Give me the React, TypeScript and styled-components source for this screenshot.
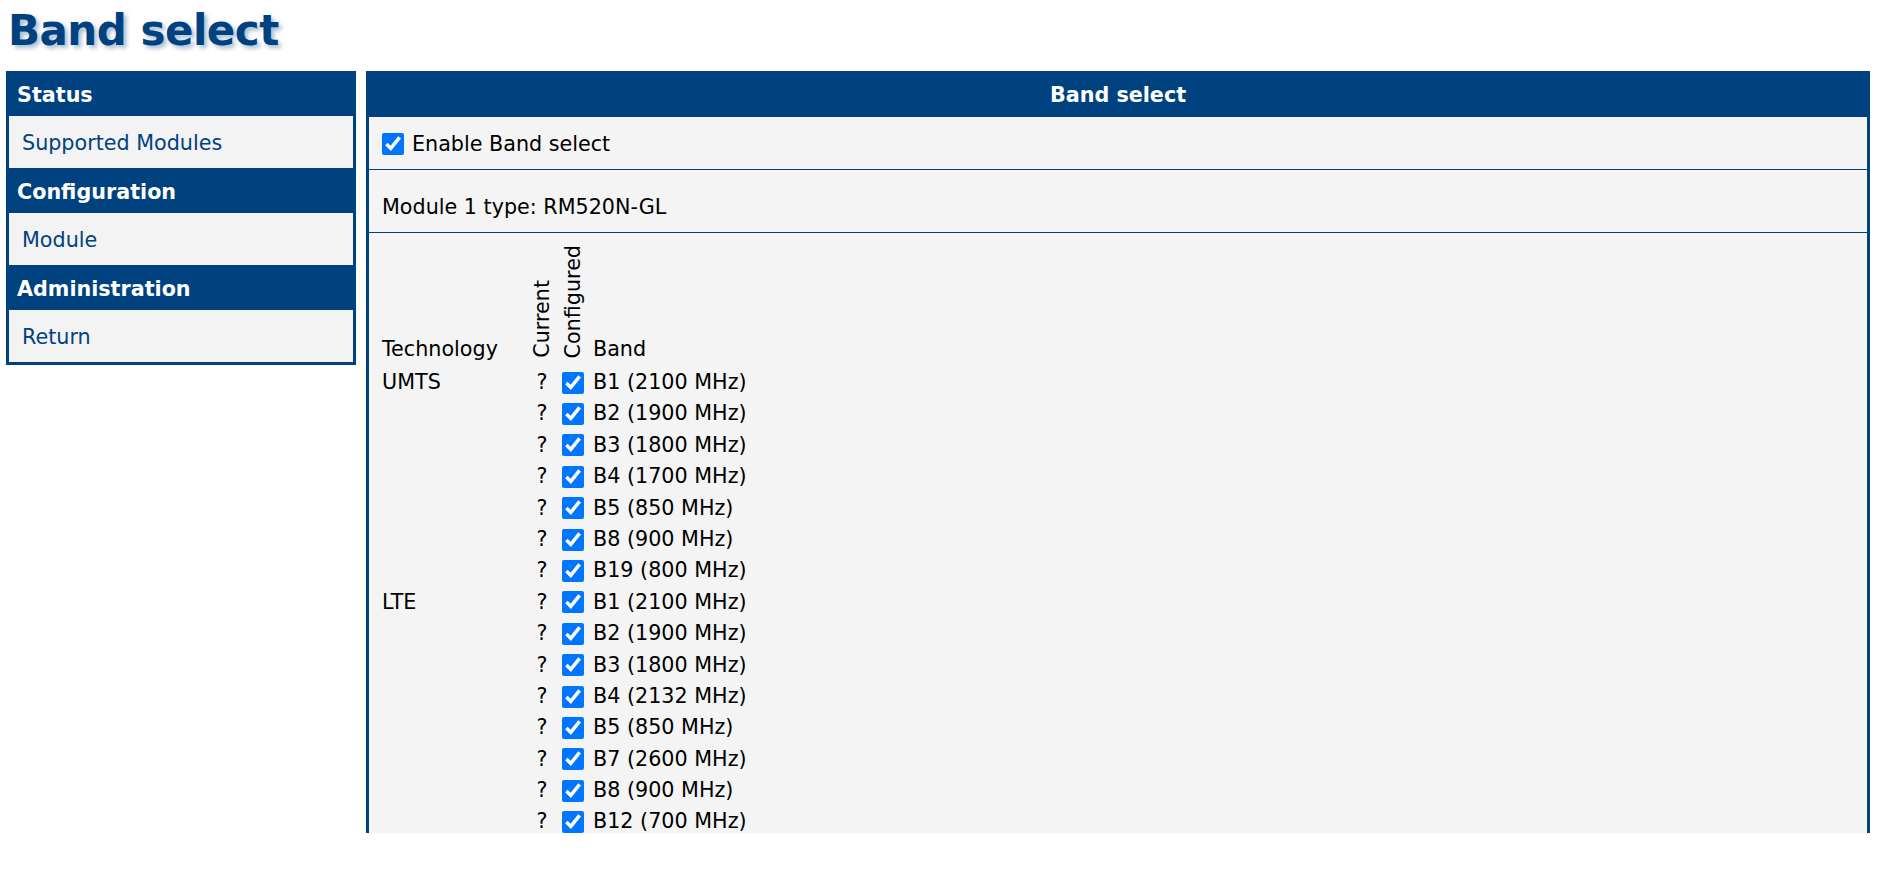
import React from "react";
import styled, { createGlobalStyle } from "styled-components";

const BLUE = "#00427f";

const GlobalStyle = createGlobalStyle`
  html, body { margin: 0; padding: 0; background: #ffffff; }
  body { font-family: "DejaVu Sans", Verdana, sans-serif; font-size: 20.7px; color: #000; }
  * { box-sizing: border-box; }
`;

const Page = styled.div`
  padding: 0 9px 0 6px;
`;

const Title = styled.h1`
  margin: 0 0 15px 2px;
  padding-top: 6px;
  height: 56px;
  line-height: 50px;
  font-size: 42px;
  letter-spacing: -0.5px;
  font-weight: bold;
  color: ${BLUE};
  text-shadow: 3px 3px 4px rgba(0, 66, 127, 0.35);
`;

const Layout = styled.div`
  display: flex;
  align-items: flex-start;
  gap: 10px;
`;

const Sidebar = styled.nav`
  width: 350px;
  flex: 0 0 350px;
  background: ${BLUE};
  padding: 0 3px 3px 3px;
  display: flex;
  flex-direction: column;
`;

const SideHeader = styled.div`
  height: 45px;
  line-height: 48px;
  padding-left: 8px;
  color: #fff;
  font-weight: bold;
`;

const SideItem = styled.a`
  display: block;
  height: 52px;
  line-height: 54px;
  padding-left: 13px;
  background: #f3f3f3;
  color: ${BLUE};
  text-decoration: none;
`;

const Main = styled.section`
  flex: 1;
  min-width: 0;
  display: flex;
  flex-direction: column;
`;

const PanelHeader = styled.div`
  height: 46px;
  line-height: 49px;
  background: ${BLUE};
  color: #fff;
  font-weight: bold;
  text-align: center;
`;

const PanelBody = styled.div`
  height: 716px;
  overflow: hidden;
  background: #f4f4f4;
  border-left: 3px solid ${BLUE};
  border-right: 3px solid ${BLUE};
`;

const Section = styled.div<{ $h: number; $pt?: number }>`
  height: ${(p) => p.$h + 1}px;
  padding: ${(p) => p.$pt ?? 0}px 0 0 13px;
  border-bottom: 1px solid ${BLUE};
  display: flex;
  align-items: center;
`;

const CheckLabel = styled.label`
  display: flex;
  align-items: center;
  gap: 8px;
`;

const Check = styled.input.attrs({ type: "checkbox" })`
  width: 22px;
  height: 22px;
  margin: 0;
  accent-color: #0075ff;
`;

const BandGrid = styled.div`
  display: grid;
  grid-template-columns: 145px 30px 31px auto;
  grid-template-rows: 120px;
  grid-auto-rows: 31.4px;
  padding: 14px 0 0 13px;
  line-height: 31.4px;
`;

const HeadCell = styled.div<{ $pad?: number }>`
  display: flex;
  flex-direction: column;
  justify-content: flex-end;
  align-items: center;
  padding-bottom: ${(p) => p.$pad ?? 0}px;
`;

const HeadText = styled.div<{ $pl?: number }>`
  align-self: end;
  padding: 0 0 2px ${(p) => p.$pl ?? 0}px;
`;

const Vertical = styled.span`
  writing-mode: vertical-rl;
  transform: rotate(180deg);
  line-height: normal;
`;

const Cell = styled.div<{ $center?: boolean; $pl?: number }>`
  display: flex;
  align-items: center;
  justify-content: ${(p) => (p.$center ? "center" : "flex-start")};
  padding-left: ${(p) => p.$pl ?? 0}px;
  white-space: nowrap;
`;

const bands: { tech: string; items: string[] }[] = [
  {
    tech: "UMTS",
    items: [
      "B1 (2100 MHz)",
      "B2 (1900 MHz)",
      "B3 (1800 MHz)",
      "B4 (1700 MHz)",
      "B5 (850 MHz)",
      "B8 (900 MHz)",
      "B19 (800 MHz)",
    ],
  },
  {
    tech: "LTE",
    items: [
      "B1 (2100 MHz)",
      "B2 (1900 MHz)",
      "B3 (1800 MHz)",
      "B4 (2132 MHz)",
      "B5 (850 MHz)",
      "B7 (2600 MHz)",
      "B8 (900 MHz)",
      "B12 (700 MHz)",
    ],
  },
];

export default function App() {
  return (
    <>
      <GlobalStyle />
      <Page>
        <Title>Band select</Title>
        <Layout>
          <Sidebar>
            <SideHeader>Status</SideHeader>
            <SideItem href="#">Supported Modules</SideItem>
            <SideHeader>Configuration</SideHeader>
            <SideItem href="#">Module</SideItem>
            <SideHeader>Administration</SideHeader>
            <SideItem href="#">Return</SideItem>
          </Sidebar>
          <Main>
            <PanelHeader>Band select</PanelHeader>
            <PanelBody>
              <Section $h={52} $pt={2}>
                <CheckLabel>
                  <Check defaultChecked />
                  Enable Band select
                </CheckLabel>
              </Section>
              <Section $h={62} $pt={12}>
                Module 1 type: RM520N-GL
              </Section>
              <BandGrid>
                <HeadText>Technology</HeadText>
                <HeadCell $pad={9}>
                  <Vertical>Current</Vertical>
                </HeadCell>
                <HeadCell $pad={9}>
                  <Vertical>Configured</Vertical>
                </HeadCell>
                <HeadText $pl={5}>Band</HeadText>
                {bands.map((g) =>
                  g.items.map((b, i) => (
                    <React.Fragment key={g.tech + b}>
                      <Cell>{i === 0 ? g.tech : ""}</Cell>
                      <Cell $center>?</Cell>
                      <Cell $center>
                        <Check defaultChecked />
                      </Cell>
                      <Cell $pl={5}>{b}</Cell>
                    </React.Fragment>
                  ))
                )}
              </BandGrid>
            </PanelBody>
          </Main>
        </Layout>
      </Page>
    </>
  );
}
